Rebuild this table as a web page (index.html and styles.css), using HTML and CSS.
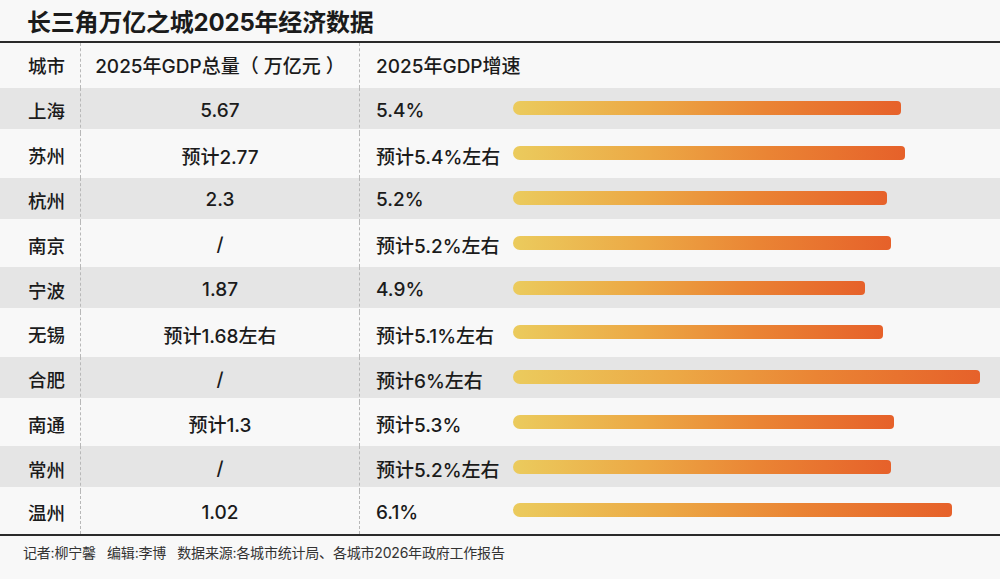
FILE: index.html
```html
<!DOCTYPE html>
<html lang="zh-CN">
<head>
<meta charset="utf-8">
<title>长三角万亿之城2025年经济数据</title>
<link rel="stylesheet" href="styles.css">
</head>
<body>
<div class="page">
  <h1 class="title">长三角万亿之城2025年经济数据</h1>
  <div class="table">
    <div class="row head">
      <div class="c city">城市</div>
      <div class="c gdp">2025年GDP总量（ 万亿元 ）</div>
      <div class="c growth"><span class="gtext">2025年GDP增速</span></div>
    </div>
    <div class="row gray"><div class="c city">上海</div><div class="c gdp">5.67</div><div class="c growth"><span class="gtext">5.4%</span><span class="bar" style="width:388px"></span></div></div>
    <div class="row"><div class="c city">苏州</div><div class="c gdp">预计2.77</div><div class="c growth"><span class="gtext">预计5.4%左右</span><span class="bar" style="width:392px"></span></div></div>
    <div class="row gray"><div class="c city">杭州</div><div class="c gdp">2.3</div><div class="c growth"><span class="gtext">5.2%</span><span class="bar" style="width:374px"></span></div></div>
    <div class="row"><div class="c city">南京</div><div class="c gdp">/</div><div class="c growth"><span class="gtext">预计5.2%左右</span><span class="bar" style="width:378px"></span></div></div>
    <div class="row gray"><div class="c city">宁波</div><div class="c gdp">1.87</div><div class="c growth"><span class="gtext">4.9%</span><span class="bar" style="width:352px"></span></div></div>
    <div class="row"><div class="c city">无锡</div><div class="c gdp">预计1.68左右</div><div class="c growth"><span class="gtext">预计5.1%左右</span><span class="bar" style="width:370px"></span></div></div>
    <div class="row gray"><div class="c city">合肥</div><div class="c gdp">/</div><div class="c growth"><span class="gtext">预计6%左右</span><span class="bar" style="width:467px"></span></div></div>
    <div class="row"><div class="c city">南通</div><div class="c gdp">预计1.3</div><div class="c growth"><span class="gtext">预计5.3%</span><span class="bar" style="width:381px"></span></div></div>
    <div class="row gray"><div class="c city">常州</div><div class="c gdp">/</div><div class="c growth"><span class="gtext">预计5.2%左右</span><span class="bar" style="width:378px"></span></div></div>
    <div class="row last"><div class="c city">温州</div><div class="c gdp">1.02</div><div class="c growth"><span class="gtext">6.1%</span><span class="bar" style="width:439px"></span></div></div>
  </div>
  <div class="footer">记者:柳宁馨&nbsp;&nbsp;&nbsp;编辑:李博&nbsp;&nbsp;&nbsp;数据来源:各城市统计局、各城市2026年政府工作报告</div>
</div>
</body>
</html>
```

FILE: styles.css
```css
* { box-sizing: border-box; margin: 0; padding: 0; }
html, body { background: #f8f8f8; }
body {
  width: 1000px;
  height: 579px;
  overflow: hidden;
  font-family: "Inter", "Noto Sans CJK SC", sans-serif;
  color: #1b1b1b;
}
.page { display: flex; flex-direction: column; }
.title {
  height: 43px;
  padding-left: 27px;
  padding-top: 8px;
  font-size: 24px;
  line-height: 30px;
  font-weight: 700;
  border-bottom: 2px solid #2a2a2a;
  letter-spacing: -0.2px;
}
.table {
  display: flex;
  flex-direction: column;
  border-bottom: 2px solid #2a2a2a;
}
.row {
  display: grid;
  grid-template-columns: 80px 279px 1fr;
  grid-template-rows: 100%;
  height: 44.8px;
  font-size: 19px;
  font-weight: 500;
  white-space: nowrap;
}
.row.head { height: 45px; }
.row.gray {
  background: linear-gradient(#e5e5e5 0, #e5e5e5 41.4px, transparent 41.4px);
}
.row.last { height: 42.5px; }
.c {
  display: flex;
  align-items: center;
  height: 100%;
  min-width: 0;
}
.city { padding-left: 28px; font-size: 18.5px; }
.gdp {
  justify-content: center;
  border-left: 1px dashed #b8b8b8;
}
.growth {
  border-left: 1px dashed #b8b8b8;
  padding-left: 16px;
}
.head .c { padding-bottom: 2px; }
.gtext { width: 137px; flex: none; }
.head .gtext { width: auto; }
.bar {
  display: block;
  height: 14px;
  margin-top: -4px;
  border-radius: 7px 4px 4px 7px;
  background: linear-gradient(90deg, #ebcb5d 0%, #eca845 35%, #ea8434 65%, #e6612a 100%);
}
.footer {
  padding-left: 23px;
  padding-top: 7px;
  font-size: 14px;
  line-height: 20px;
  font-weight: 400;
  color: #333;
  letter-spacing: -0.2px;
}
```
